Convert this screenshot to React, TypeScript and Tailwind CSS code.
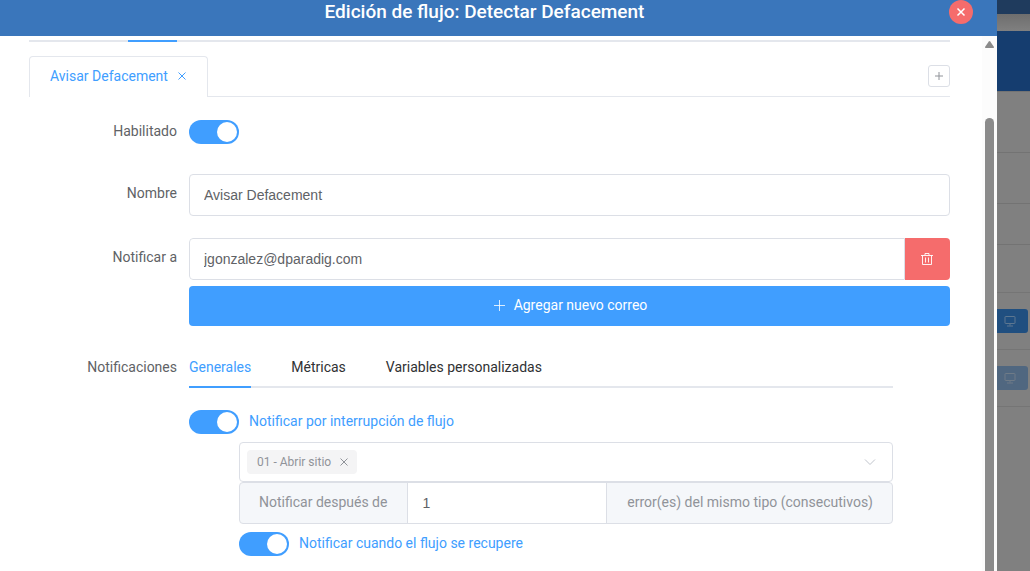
import { useState } from "react";
import type { ReactNode } from "react";

function CloseIcon({ className }: { className: string }) {
  return (
    <svg viewBox="0 0 12 12" fill="none" stroke="currentColor" className={className} aria-hidden="true">
      <path d="M2.500 2.500l7 7M9.500 2.500l-7 7" />
    </svg>
  );
}

function PlusIcon({ className }: { className: string }) {
  return (
    <svg viewBox="0 0 14 14" fill="none" stroke="currentColor" strokeOpacity="0.8" className={className} aria-hidden="true">
      <path d="M7.500 2v11M2 7.500h11" />
    </svg>
  );
}

function SmallPlusIcon() {
  return (
    <svg viewBox="0 0 12 12" fill="none" stroke="currentColor" className="size-3" aria-hidden="true">
      <path d="M6 2v8M2 6h8" />
    </svg>
  );
}

function TrashIcon() {
  return (
    <svg viewBox="0 0 14 14" fill="none" stroke="currentColor" className="size-3.5" aria-hidden="true">
      <path d="M0 3.500h12M4 3V1.500h4V3M1.500 3.500v9h9v-9M4.500 5.500v5M7.500 5.500v5" strokeOpacity="0.9" />
    </svg>
  );
}

function MonitorIcon() {
  return (
    <svg viewBox="0 0 12 12" fill="none" stroke="currentColor" className="size-3" aria-hidden="true">
      <path d="M1.500 1.500h9a.5.5 0 0 1 .5.5v6a.5.5 0 0 1-.5.5h-9a.5.5 0 0 1-.5-.5v-6a.5.5 0 0 1 .5-.5zM6 8.500v2M3 11h6" />
    </svg>
  );
}

function Switch({ id }: { id: string }) {
  return (
    <input
      id={id}
      type="checkbox"
      role="switch"
      defaultChecked
      className="h-6 w-[50px] shrink-0 cursor-pointer appearance-none rounded-full bg-[#dcdfe6] p-0.5 before:block before:size-5 before:rounded-full before:bg-white checked:bg-[#409eff] checked:before:ml-[26px]"
    />
  );
}

function FormRow({ label, htmlFor, children }: { label: string; htmlFor: string; children: ReactNode }) {
  return (
    <div className="flex">
      <label htmlFor={htmlFor} className="w-40 shrink-0 pr-3 text-right leading-[38px] text-[#606266]">
        {label}
      </label>
      <div className="min-w-0 flex-1">{children}</div>
    </div>
  );
}

const TABS = ["Generales", "Métricas", "Variables personalizadas"];

function Notifications() {
  const [active, setActive] = useState(TABS[0]);
  return (
    <div className="mr-[57px]">
      <div role="tablist" className="flex h-10 gap-10 border-b-2 border-[#e4e7ed]">
        {TABS.map((tab) => (
          <button
            key={tab}
            type="button"
            role="tab"
            aria-selected={active === tab}
            onClick={() => setActive(tab)}
            className={
              active === tab
                ? "-mb-0.5 border-b-2 border-[#409eff] text-[#409eff]"
                : "-mb-0.5 border-b-2 border-transparent text-[#303133]"
            }
          >
            {tab}
          </button>
        ))}
      </div>
      <div className="mt-[22px] flex gap-2.5">
        <Switch id="interrupcion" />
        <label htmlFor="interrupcion" className="leading-[22px] text-[#409eff]">
          Notificar por interrupción de flujo
        </label>
      </div>
      <div className="ml-[50px] mt-2">
        <div className="flex h-10 items-center rounded border border-[#dcdfe6] pl-[7px]">
          <span className="flex h-6 items-center gap-[7px] rounded bg-[#f4f4f5] pl-2.5 pr-[7px] text-xs text-[#909399]">
            01 - Abrir sitio
            <button type="button" aria-label="Quitar 01 - Abrir sitio">
              <CloseIcon className="size-3" />
            </button>
          </span>
          <div className="grid h-full min-w-0 flex-1 items-center">
            <select aria-label="Flujos" className="col-start-1 row-start-1 h-full w-full appearance-none bg-transparent outline-none">
              <option value="" />
            </select>
            <svg viewBox="0 0 12 12" fill="none" stroke="#c0c4cc" className="pointer-events-none col-start-1 row-start-1 mr-4 size-3 justify-self-end" aria-hidden="true">
              <path d="M1 3.500l5 5 5-5" />
            </svg>
          </div>
        </div>
        <div className="flex h-[42px] overflow-hidden rounded border border-[#dcdfe6] bg-[#f5f7fa] leading-[38px] text-[#909399]">
          <label htmlFor="errores" className="pr-5 pl-[19px]">
            Notificar después de
          </label>
          <input
            id="errores"
            defaultValue="1"
            className="min-w-0 flex-1 border-x border-[#dcdfe6] bg-white px-3.5 font-['Liberation_Sans',Arial,sans-serif] text-[#606266] outline-none"
          />
          <span className="pr-[19px] pl-5">error(es) del mismo tipo (consecutivos)</span>
        </div>
        <div className="mt-2 flex gap-2.5">
          <Switch id="recupere" />
          <label htmlFor="recupere" className="leading-[22px] text-[#409eff]">
            Notificar cuando el flujo se recupere
          </label>
        </div>
      </div>
    </div>
  );
}

function PageBehind() {
  return (
    <aside className="flex w-[33px] shrink-0 flex-col bg-[#808080]">
      <div className="h-3.5 bg-[#1f3b5d]" />
      <div className="h-[17px] bg-linear-to-b from-[#6e6e6e] to-[#808080]" />
      <div className="h-[60px] bg-[#153d6f]" />
      <div className="h-[62px] border-y border-[#737373]" />
      <div className="h-[51px] border-b border-[#737373]" />
      <div className="h-[41px] border-b border-[#737373]" />
      <div className="h-12 border-b border-[#757575]" />
      <div className="flex h-[57px] items-center border-b border-[#757575]">
        <button type="button" aria-label="Ver" className="flex h-6 w-[31px] items-center rounded-r-[3px] bg-[#204f80] pl-[7px] text-[#5d7790]">
          <MonitorIcon />
        </button>
      </div>
      <div className="flex h-[57px] items-center border-b border-[#757575]">
        <button type="button" aria-label="Ver" className="flex h-6 w-[31px] items-center rounded-r-[3px] bg-[#506780] pl-[7px] text-[#6f7b87]">
          <MonitorIcon />
        </button>
      </div>
    </aside>
  );
}

export default function App() {
  return (
    <div className="flex h-screen overflow-hidden bg-white font-[Roboto,sans-serif] text-sm">
      <main className="flex min-w-0 flex-1 flex-col">
        <header className="flex h-9 shrink-0 items-start bg-[#3a76bb] pl-5 pr-6 text-white">
          <h1 className="flex-1 text-center text-[19px] leading-6 font-medium">Edición de flujo: Detectar Defacement</h1>
          <button type="button" aria-label="Cerrar" className="flex size-6 items-center justify-center rounded-full bg-[#f56c6c]">
            <CloseIcon className="size-3 stroke-[1.5]" />
          </button>
        </header>
        <div className="flex min-h-0 flex-1">
          <div className="min-w-0 flex-1 overflow-hidden pt-1 pr-8 pl-[29px]">
            <div className="h-0.5 bg-[#e4e7ed]">
              <div className="ml-[99px] h-full w-[49px] bg-[#409eff]" />
            </div>
            <div className="mt-3.5 flex h-[41px] items-center justify-between border-b border-[#e4e7ed]">
              <div className="-mb-px flex h-[41px] items-center gap-2 rounded-t border border-b-0 border-[#e4e7ed] bg-white pr-[19px] pb-0.5 pl-5 text-[#409eff]">
                <button type="button">Avisar Defacement</button>
                <button type="button" aria-label="Cerrar pestaña">
                  <CloseIcon className="size-3" />
                </button>
              </div>
              <button type="button" aria-label="Agregar pestaña" className="flex size-[22px] items-center justify-center rounded-[3px] border border-[#dcdfe6] text-[#909399]">
                <SmallPlusIcon />
              </button>
            </div>
            <form className="mt-[15px] flex flex-col gap-[22px]">
              <FormRow label="Habilitado" htmlFor="habilitado">
                <div className="flex h-10 items-center">
                  <Switch id="habilitado" />
                </div>
              </FormRow>
              <FormRow label="Nombre" htmlFor="nombre">
                <input
                  id="nombre"
                  defaultValue="Avisar Defacement"
                  className="block h-[42px] w-full rounded border border-[#dcdfe6] px-3.5 font-['Liberation_Sans',Arial,sans-serif] text-[#606266] outline-none"
                />
              </FormRow>
              <FormRow label="Notificar a" htmlFor="correo">
                <div className="flex h-[42px] overflow-hidden rounded">
                  <input
                    id="correo"
                    defaultValue="jgonzalez@dparadig.com"
                    className="min-w-0 flex-1 rounded-l border border-[#dcdfe6] px-3.5 font-['Liberation_Sans',Arial,sans-serif] text-[#606266] outline-none"
                  />
                  <button type="button" aria-label="Eliminar correo" className="flex w-[45px] items-center justify-center bg-[#f56c6c] text-white">
                    <TrashIcon />
                  </button>
                </div>
                <button type="button" className="mt-1.5 flex h-10 w-full items-center justify-center gap-2 rounded bg-[#409eff] pb-0.5 text-white">
                  <PlusIcon className="size-3.5" />
                  Agregar nuevo correo
                </button>
              </FormRow>
              <FormRow label="Notificaciones" htmlFor="interrupcion">
                <Notifications />
              </FormRow>
            </form>
          </div>
          <div className="flex w-[15px] shrink-0 flex-col items-center bg-[#fcfcfc] pt-[5px]">
            <svg viewBox="0 0 9 7" className="h-[7px] w-[9px]" fill="#8b8b8b" aria-hidden="true">
              <path d="M3.800.5q.7-.9 1.400 0L9 6q.2 1-.8 1H.8Q-.2 7 0 6z" />
            </svg>
            <div className="mt-[70px] w-[9px] flex-1 rounded-t-full bg-[#8b8b8b]" />
          </div>
        </div>
      </main>
      <PageBehind />
    </div>
  );
}
